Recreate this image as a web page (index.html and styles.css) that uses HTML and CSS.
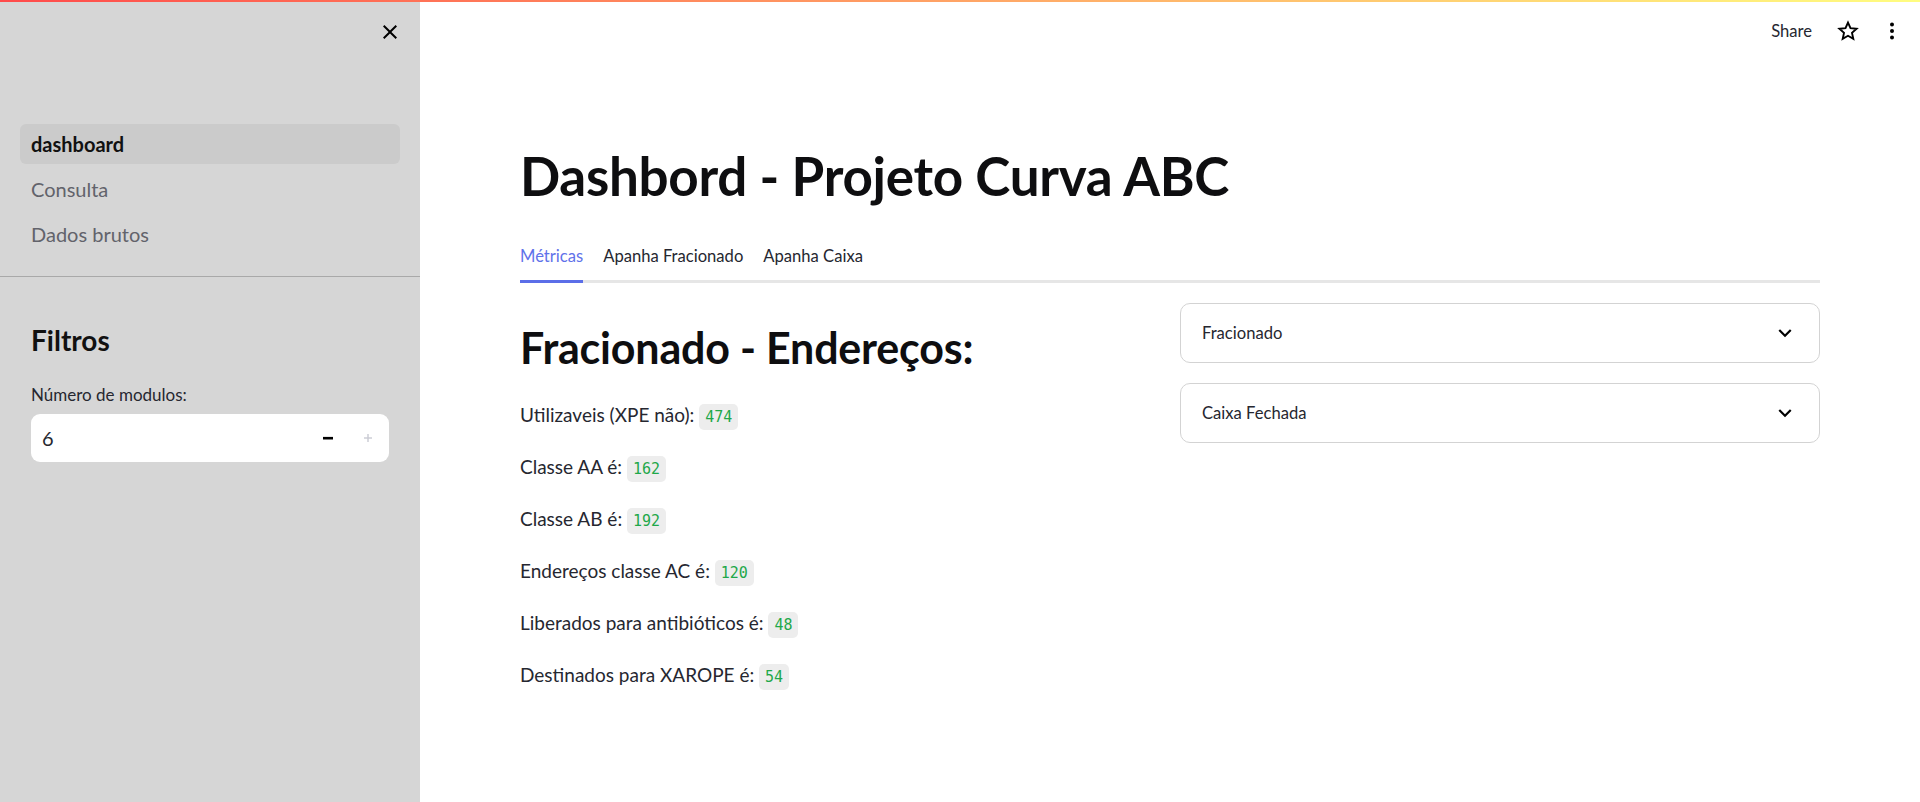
FILE: index.html
```html
<!DOCTYPE html>
<html lang="pt">
<head>
<meta charset="utf-8">
<title>Dashbord - Projeto Curva ABC</title>
<link rel="stylesheet" href="styles.css">
</head>
<body>
<div class="decoration"></div>
<div class="app">
  <aside class="sidebar">
    <div class="sb-top">
      <button class="icon-btn" aria-label="Close">
        <svg viewBox="0 0 24 24" width="24" height="24"><path d="M19 6.41L17.59 5 12 10.59 6.41 5 5 6.41 10.59 12 5 17.59 6.41 19 12 13.41 17.59 19 19 17.59 13.41 12z" fill="#000"/></svg>
      </button>
    </div>
    <nav class="nav">
      <a class="nav-item active">dashboard</a>
      <a class="nav-item">Consulta</a>
      <a class="nav-item">Dados brutos</a>
    </nav>
    <div class="sb-content">
      <h2 class="sb-title">Filtros</h2>
      <label class="input-label">Número de modulos:</label>
      <div class="num-input">
        <span class="num-value">6</span>
        <span class="step minus"><svg viewBox="0 0 12 12" width="12" height="12"><rect x="1" y="4.9" width="10" height="2.6" fill="#000"/></svg></span>
        <span class="step plus"><svg viewBox="0 0 12 12" width="12" height="12"><rect x="2" y="5.3" width="8" height="1.4" fill="#c9cbd3"/><rect x="5.3" y="2" width="1.4" height="8" fill="#c9cbd3"/></svg></span>
      </div>
    </div>
  </aside>
  <main class="main">
    <header class="topbar">
      <span class="share">Share</span>
      <svg class="hdr-icon" viewBox="0 0 24 24" width="24" height="24"><path d="M12 3.6l2.5 5.6 6.1.6-4.6 4.1 1.3 6-5.3-3.1-5.3 3.1 1.3-6-4.6-4.1 6.1-.6z" fill="none" stroke="#000" stroke-width="1.9" stroke-linejoin="miter"/></svg>
      <svg class="hdr-icon" viewBox="0 0 24 24" width="24" height="24"><circle cx="12" cy="5.5" r="2" fill="#000"/><circle cx="12" cy="12" r="2" fill="#000"/><circle cx="12" cy="18.5" r="2" fill="#000"/></svg>
    </header>
    <div class="block">
      <h1 class="title">Dashbord - Projeto Curva ABC</h1>
      <div class="tabs">
        <span class="tab active">Métricas</span>
        <span class="tab">Apanha Fracionado</span>
        <span class="tab">Apanha Caixa</span>
      </div>
      <div class="columns">
        <div class="col">
          <h2 class="section-title">Fracionado - Endereços:</h2>
          <p class="metric">Utilizaveis (XPE não): <code>474</code></p>
          <p class="metric">Classe AA é: <code>162</code></p>
          <p class="metric">Classe AB é: <code>192</code></p>
          <p class="metric">Endereços classe AC é: <code>120</code></p>
          <p class="metric">Liberados para antibióticos é: <code>48</code></p>
          <p class="metric">Destinados para XAROPE é: <code>54</code></p>
        </div>
        <div class="col col-right">
          <div class="expander">
            <span class="exp-label">Fracionado</span>
            <svg viewBox="0 0 24 24" width="26" height="26"><path d="M16.59 8.59L12 13.17 7.41 8.59 6 10l6 6 6-6z" fill="#000"/></svg>
          </div>
          <div class="expander">
            <span class="exp-label">Caixa Fechada</span>
            <svg viewBox="0 0 24 24" width="26" height="26"><path d="M16.59 8.59L12 13.17 7.41 8.59 6 10l6 6 6-6z" fill="#000"/></svg>
          </div>
        </div>
      </div>
    </div>
  </main>
</div>
</body>
</html>
```
FILE: styles.css
```css
* { box-sizing: border-box; }
html, body { margin: 0; padding: 0; }
body {
  font-family: Lato, "Liberation Sans", sans-serif;
  color: #262730;
  background: #fff;
  width: 1920px;
  height: 802px;
  overflow: hidden;
}
.decoration {
  height: 2px;
  background: linear-gradient(90deg, #ff4b4b, #fffd80);
}
.app {
  display: flex;
  height: 800px;
}
.sidebar {
  width: 420px;
  flex: 0 0 420px;
  background: #d6d6d6;
  display: flex;
  flex-direction: column;
}
.sb-top {
  display: flex;
  justify-content: flex-end;
  padding: 18px 18px 0 0;
}
.icon-btn {
  border: 0;
  background: transparent;
  padding: 0;
  width: 24px;
  height: 24px;
  display: flex;
}
.nav {
  display: flex;
  flex-direction: column;
  gap: 5px;
  padding: 80px 20px 22px;
  border-bottom: 1px solid #a9a9a9;
}
.nav-item {
  height: 40px;
  display: flex;
  align-items: center;
  padding-left: 11px;
  border-radius: 6px;
  font-size: 20px;
  color: #62636b;
}
.nav-item.active {
  background: #cbcbcb;
  color: #111;
  font-weight: 700;
}
.sb-content {
  padding: 47px 31px 0;
  display: flex;
  flex-direction: column;
}
.sb-title {
  margin: 0;
  font-size: 28px;
  line-height: 1.2;
  font-weight: 700;
  color: #111;
}
.input-label {
  margin-top: 23px;
  font-size: 17px;
  line-height: 28px;
  color: #262730;
}
.num-input {
  margin-top: 5px;
  height: 48px;
  background: #fff;
  border-radius: 9px;
  display: flex;
  align-items: center;
  padding: 0 1px 0 11px;
}
.num-value {
  flex: 1;
  font-size: 20px;
  color: #262730;
}
.step {
  width: 40px;
  display: flex;
  justify-content: center;
}
.main {
  flex: 1;
  display: flex;
  flex-direction: column;
}
.topbar {
  height: 58px;
  display: flex;
  align-items: center;
  justify-content: flex-end;
  padding-right: 16px;
  gap: 20px;
}
.share {
  font-size: 16.6px;
  color: #262730;
  margin-right: 4px;
}
.hdr-icon { display: block; }
.block {
  padding: 83px 100px 0;
}
.title {
  margin: 0;
  font-size: 53px;
  line-height: 66px;
  letter-spacing: -0.3px;
  font-weight: 700;
  color: #0e0e10;
}
.tabs {
  margin-top: 33px;
  display: flex;
  gap: 20px;
  border-bottom: 3px solid #e6e6e6;
}
.tab {
  font-size: 16.6px;
  line-height: 28px;
  padding-bottom: 10px;
  color: #262730;
}
.tab.active {
  color: #5f72ea;
  border-bottom: 3px solid #5b6ee8;
  margin-bottom: -3px;
}
.columns {
  margin-top: 20px;
  display: grid;
  grid-template-columns: 1fr 1fr;
  gap: 20px;
}
.section-title {
  margin: 0;
  padding-top: 18px;
  font-size: 43px;
  line-height: 54px;
  letter-spacing: -0.2px;
  font-weight: 700;
  color: #0e0e10;
}
.metric {
  margin: 0 0 20px;
  font-size: 19px;
  line-height: 32px;
  color: #262730;
}
.section-title + .metric { margin-top: 24px; }
code {
  font-family: "DejaVu Sans Mono", "Liberation Mono", monospace;
  font-size: 15px;
  line-height: 1;
  color: #1fa84a;
  background: #ededed;
  border-radius: 5px;
  padding: 4px 6px;
}
.col-right {
  display: flex;
  flex-direction: column;
  gap: 20px;
}
.expander {
  height: 60px;
  border: 1px solid #d3d3d3;
  border-radius: 10px;
  display: flex;
  align-items: center;
  justify-content: space-between;
  padding: 0 21px;
}
.exp-label {
  font-size: 16.6px;
  color: #262730;
}
```
